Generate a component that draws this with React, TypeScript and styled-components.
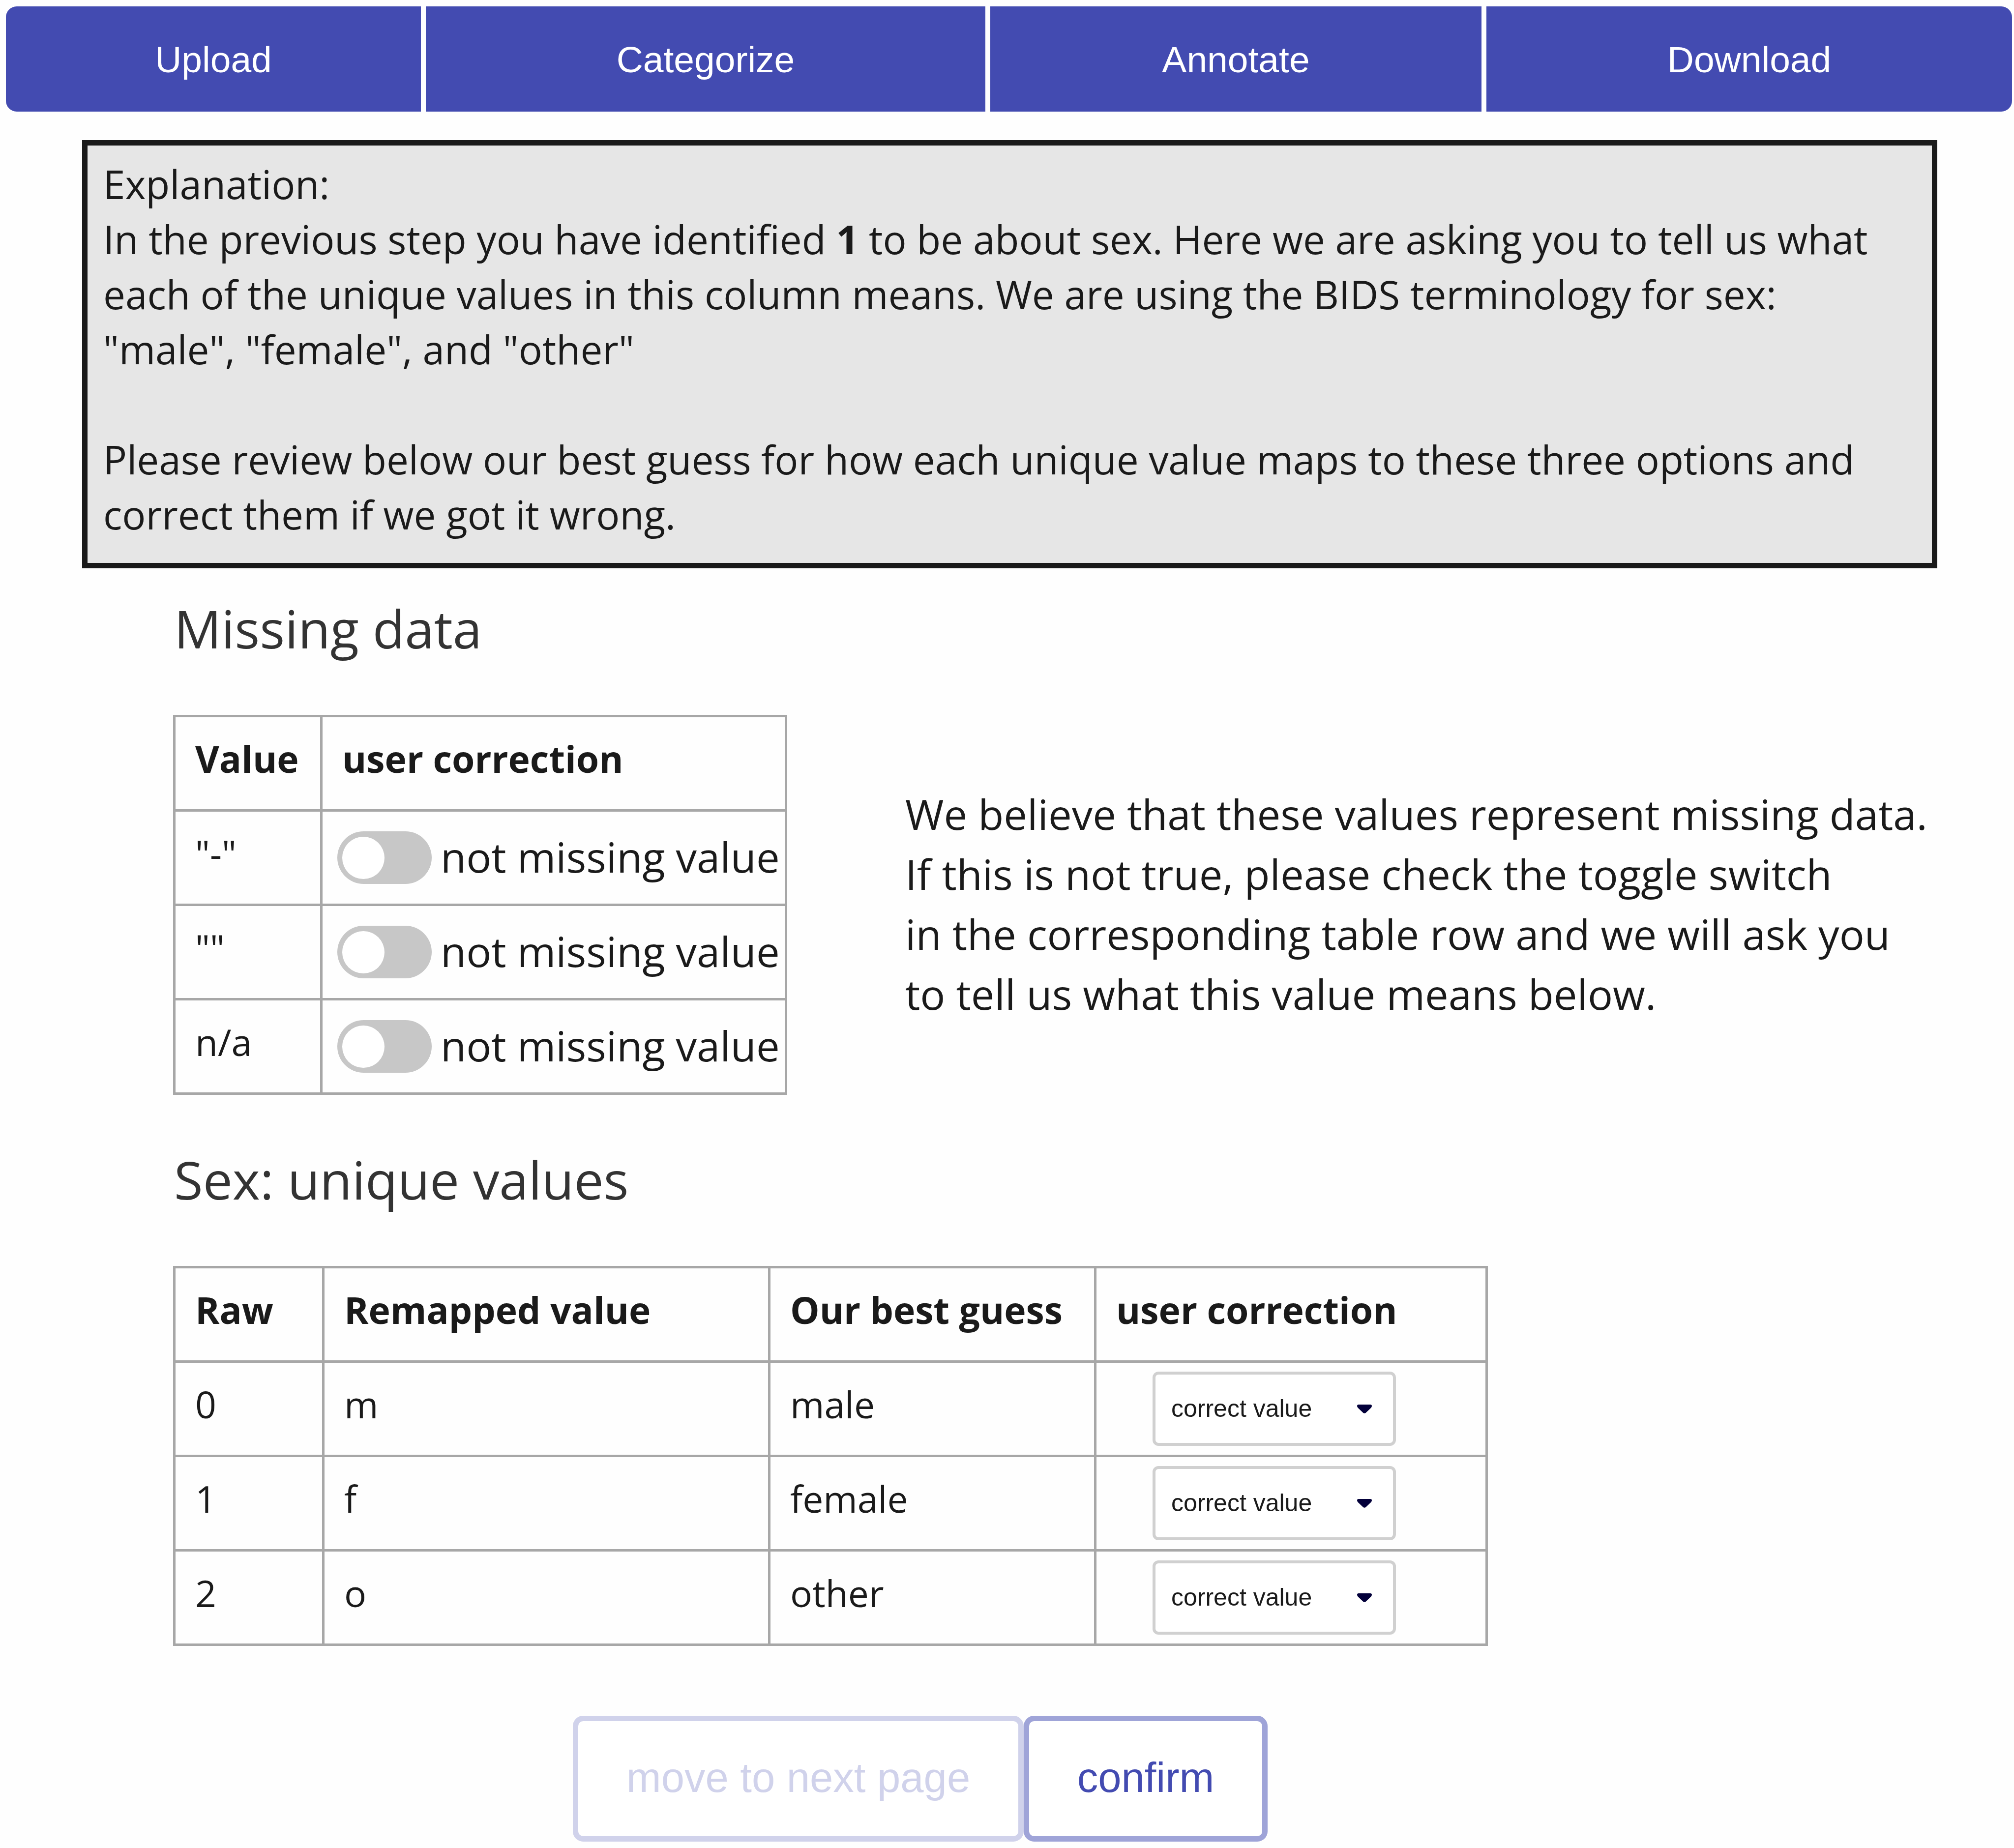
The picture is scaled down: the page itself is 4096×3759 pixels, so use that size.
import React from "react";
import styled, { createGlobalStyle } from "styled-components";

const GlobalStyle = createGlobalStyle`
  *, *::before, *::after { box-sizing: border-box; }
  body {
    margin: 0;
    background: #fefefe;
    color: #1a1a1a;
    font-family: "Open Sans", "Noto Sans", sans-serif;
  }
`;

const Page = styled.div`
  display: flex;
  flex-direction: column;
  width: 100%;
`;

const StepBar = styled.nav`
  display: grid;
  grid-template-columns: 844fr 1138fr 999fr 1069fr;
  gap: 10px;
  padding: 13px 4px 0 12px;
`;

const Step = styled.button`
  height: 214px;
  border: 0;
  padding: 2px 0 0;
  background: #434bb1;
  color: #fff;
  font-family: "Liberation Sans", Arial, sans-serif;
  font-size: 75px;

  &:first-child { border-radius: 22px 0 0 22px; }
  &:last-child { border-radius: 0 22px 22px 0; }
`;

const Explanation = styled.section`
  margin: 58px 156px 0 167px;
  padding: 22px 32px 43px;
  border: 11px solid #1a1a1a;
  background: #e6e6e6;
  font-size: 80px;
  line-height: 112px;

  p { margin: 0; }
  p + p { margin-top: 112px; }
`;

const Content = styled.main`
  display: flex;
  flex-direction: column;
  padding: 0 156px 0 352px;
`;

const Heading = styled.h2`
  margin: 0;
  padding-left: 2px;
  color: #333;
  font-size: 107px;
  font-weight: 400;
  line-height: 150px;
`;

const Section = styled.section<{ $top: number }>`
  margin-top: ${(p) => p.$top}px;
`;

const MissingRow = styled.div`
  display: flex;
  align-items: center;
  gap: 240px;
  margin-top: 101px;
`;

const Table = styled.table<{ $width: number }>`
  width: ${(p) => p.$width}px;
  flex: none;
  border-collapse: collapse;
  table-layout: fixed;
  font-size: 75px;
  line-height: 105px;
`;

const UniqueTable = styled(Table)`
  margin-top: 101px;
`;

const Col = styled.col<{ $width?: number }>`
  width: ${(p) => (p.$width ? `${p.$width}px` : "auto")};
`;

const cell = `
  height: 192px;
  border: 5px solid #a7a7a7;
  text-align: left;
  vertical-align: top;
  white-space: nowrap;
`;

const Th = styled.th`
  ${cell}
  padding: 32px 0 0 40px;
  font-weight: 700;
`;

const Td = styled.td`
  ${cell}
  padding: 32px 0 0 40px;
`;

const ControlTd = styled.td<{ $left: number }>`
  ${cell}
  padding: 0 0 0 ${(p) => p.$left}px;
  vertical-align: middle;
`;

const SwitchLabel = styled.label`
  display: flex;
  align-items: center;
  gap: 18px;
  font-size: 85px;
  line-height: 119px;
`;

const SwitchText = styled.span`
  padding-bottom: 4px;
`;

const Switch = styled.input`
  appearance: none;
  flex: none;
  display: flex;
  align-items: center;
  width: 192px;
  height: 107px;
  margin: 0;
  padding: 0 10px;
  border-radius: 54px;
  background: #c7c7c7;

  &::before {
    content: "";
    width: 86px;
    height: 86px;
    border-radius: 50%;
    background: #fff;
  }
  &:checked { justify-content: flex-end; background: #434bb1; }
`;

const Note = styled.p`
  margin: 0;
  padding-bottom: 6px;
  font-size: 85px;
  line-height: 122px;
  white-space: nowrap;
`;

const SelectBox = styled.div`
  display: grid;
  align-items: center;
  width: 495px;
  height: 151px;

  > * { grid-area: 1 / 1; }
`;

const Select = styled.select`
  appearance: none;
  width: 100%;
  height: 100%;
  padding: 0 32px 2px;
  border: 6px solid #d0d0d0;
  border-radius: 12px;
  background: #fff;
  color: #1a1a1a;
  font-family: "Liberation Sans", Arial, sans-serif;
  font-size: 50px;
`;

const Caret = styled.svg`
  justify-self: end;
  width: 30px;
  height: 18px;
  margin-right: 49px;
  pointer-events: none;
`;

const Actions = styled.div`
  display: flex;
  margin: 142px 0 0 813px;
`;

const ActionButton = styled.button<{ $width: number }>`
  width: ${(p) => p.$width}px;
  height: 256px;
  padding: 0 0 5px;
  border: 11px solid #9fa4d8;
  border-radius: 21px;
  background: #fff;
  color: #434bb1;
  font-family: "Liberation Sans", Arial, sans-serif;
  font-size: 85px;

  &:disabled { border-color: #d0d2eb; color: #d0d2eb; }
`;

const steps = ["Upload", "Categorize", "Annotate", "Download"];
const missingValues = ['"-"', '""', "n/a"];
const uniqueValues = [
  { raw: "0", remapped: "m", guess: "male" },
  { raw: "1", remapped: "f", guess: "female" },
  { raw: "2", remapped: "o", guess: "other" },
];

function CorrectionSelect({ name }: { name: string }) {
  return (
    <SelectBox>
      <Select aria-label={name} defaultValue="">
        <option value="">correct value</option>
        <option value="male">male</option>
        <option value="female">female</option>
        <option value="other">other</option>
      </Select>
      <Caret viewBox="0 0 30 18" aria-hidden="true">
        <path d="M3 0H27Q30 0 30 3Q30 5 28 7L18 16.500Q15 19 12 16.500L2 7Q0 5 0 3Q0 0 3 0Z" fill="#03003a" />
      </Caret>
    </SelectBox>
  );
}

export default function App() {
  return (
    <Page>
      <GlobalStyle />
      <StepBar>
        {steps.map((step) => (
          <Step key={step} type="button">{step}</Step>
        ))}
      </StepBar>
      <Explanation>
        <p>
          Explanation:
          <br />
          In the previous step you have identified <b>1</b> to be about sex. Here we are asking you to tell us what
          <br />
          each of the unique values in this column means. We are using the BIDS terminology for sex:
          <br />
          "male", "female", and "other"
        </p>
        <p>
          Please review below our best guess for how each unique value maps to these three options and
          correct them if we got it wrong.
        </p>
      </Explanation>
      <Content>
        <Section $top={47}>
          <Heading>Missing data</Heading>
          <MissingRow>
            <Table $width={1249}>
              <colgroup>
                <Col $width={299} />
                <Col />
              </colgroup>
              <thead>
                <tr>
                  <Th>Value</Th>
                  <Th>user correction</Th>
                </tr>
              </thead>
              <tbody>
                {missingValues.map((value) => (
                  <tr key={value}>
                    <Td>{value}</Td>
                    <ControlTd $left={30}>
                      <SwitchLabel>
                        <Switch type="checkbox" role="switch" />
                        <SwitchText>not missing value</SwitchText>
                      </SwitchLabel>
                    </ControlTd>
                  </tr>
                ))}
              </tbody>
            </Table>
            <Note>
              We believe that these values represent missing data.
              <br />
              If this is not true, please check the toggle switch
              <br />
              in the corresponding table row and we will ask you
              <br />
              to tell us what this value means below.
            </Note>
          </MissingRow>
        </Section>
        <Section $top={97}>
          <Heading>Sex: unique values</Heading>
          <UniqueTable $width={2674}>
            <colgroup>
              <Col $width={303} />
              <Col $width={907} />
              <Col $width={663} />
              <Col />
            </colgroup>
            <thead>
              <tr>
                <Th>Raw</Th>
                <Th>Remapped value</Th>
                <Th>Our best guess</Th>
                <Th>user correction</Th>
              </tr>
            </thead>
            <tbody>
              {uniqueValues.map((row) => (
                <tr key={row.raw}>
                  <Td>{row.raw}</Td>
                  <Td>{row.remapped}</Td>
                  <Td>{row.guess}</Td>
                  <ControlTd $left={114}>
                    <CorrectionSelect name={`Correction for ${row.raw}`} />
                  </ControlTd>
                </tr>
              ))}
            </tbody>
          </UniqueTable>
        </Section>
        <Actions>
          <ActionButton type="button" disabled $width={917}>move to next page</ActionButton>
          <ActionButton type="button" $width={496}>confirm</ActionButton>
        </Actions>
      </Content>
    </Page>
  );
}
